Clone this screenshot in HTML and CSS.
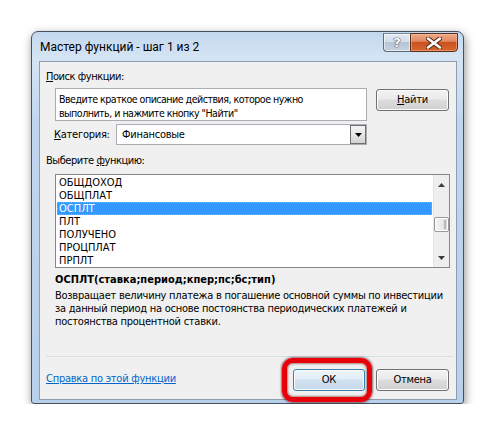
FILE: index.html
```html
<!DOCTYPE html>
<html lang="ru">
<head>
<meta charset="utf-8">
<title>Мастер функций</title>
<link rel="stylesheet" href="styles.css">
</head>
<body>
<div class="stage">
  <div class="window">
    <div class="titlebar">
      <span class="title">Мастер функций - шаг 1 из 2</span>
      <div class="caption">
        <div class="cap-btn help"><span class="help-glyph">?</span></div>
        <div class="cap-btn close">
          <svg width="16" height="12" viewBox="0 0 16 12"><path d="M2 1.5 L14 10.5 M14 1.5 L2 10.5" stroke="#5a2a14" stroke-width="4.6" stroke-linecap="round" fill="none"/><path d="M2 1.5 L14 10.5 M14 1.5 L2 10.5" stroke="#ffffff" stroke-width="2.6" stroke-linecap="round" fill="none"/></svg>
        </div>
      </div>
    </div>
    <div class="frame-body">
      <div class="client">
        <div class="label first"><u>П</u>оиск функции:</div>
        <div class="search-row">
          <div class="search-box">Введите краткое описание действия, которое нужно<br>выполнить, и нажмите кнопку "Найти"</div>
          <div class="btn find"><span><u>Н</u>айти</span></div>
        </div>
        <div class="cat-row">
          <span class="cat-label"><u>К</u>атегория:</span>
          <div class="combo">
            <span class="combo-text">Финансовые</span>
            <div class="dd"><svg width="7" height="4" viewBox="0 0 7 4"><polygon points="0,0 7,0 3.5,4" fill="#000"/></svg></div>
          </div>
        </div>
        <div class="label second">Выберите <u>ф</u>ункцию:</div>
        <div class="listbox">
          <div class="items">
            <div class="item">ОБЩДОХОД</div>
            <div class="item">ОБЩПЛАТ</div>
            <div class="item selected">ОСПЛТ</div>
            <div class="item">ПЛТ</div>
            <div class="item">ПОЛУЧЕНО</div>
            <div class="item">ПРОЦПЛАТ</div>
            <div class="item">ПРПЛТ</div>
          </div>
          <div class="vscroll">
            <div class="arrow up"><svg width="7" height="4" viewBox="0 0 7 4"><polygon points="0,4 7,4 3.5,0" fill="#3c3c3c"/></svg></div>
            <div class="track"><div class="thumb"><span class="grip"></span></div></div>
            <div class="arrow down"><svg width="7" height="4" viewBox="0 0 7 4"><polygon points="0,0 7,0 3.5,4" fill="#3c3c3c"/></svg></div>
          </div>
        </div>
        <div class="signature">ОСПЛТ(ставка;период;кпер;пс;бс;тип)</div>
        <div class="desc">Возвращает величину платежа в погашение основной суммы по инвестиции<br>за данный период на основе постоянства периодических платежей и<br>постоянства процентной ставки.</div>
        <div class="bottom">
          <div class="sep"></div>
          <div class="btn-row">
            <a class="help-link" href="#">Справка по этой функции</a>
            <div class="ok-wrap">
              <div class="btn ok"><span>ОК</span></div>
              <div class="ring"></div>
            </div>
            <div class="btn cancel"><span>Отмена</span></div>
          </div>
        </div>
      </div>
    </div>
  </div>
</div>
</body>
</html>
```
FILE: styles.css
```css
* { box-sizing: border-box; }

body {
  margin: 0;
  background: #ffffff;
  font-family: "DejaVu Sans Condensed", "DejaVu Sans", sans-serif;
  font-stretch: condensed;
  font-size: 11px;
  letter-spacing: -0.25px;
  color: #000;
}

.stage {
  padding: 31px 0 0 31px;
}

.window {
  width: 433px;
  height: 373px;
  border: 1px solid #44505e;
  border-radius: 7px 7px 3px 3px;
  background: linear-gradient(180deg, #c4d8ee 0%, #d4e4f4 7%, #c0d5ed 25%, #b9d0ea 100%);
  box-shadow: 1px 3px 10px rgba(0, 0, 0, 0.45);
  display: flex;
  flex-direction: column;
}

.titlebar {
  height: 29px;
  flex: none;
  display: flex;
  align-items: center;
  padding: 0 5px 0 8px;
}

.title {
  font-family: Roboto, "Open Sans", sans-serif;
  font-stretch: normal;
  letter-spacing: 0;
  font-size: 12px;
  color: #000;
  line-height: 16px;
}

.caption {
  margin-left: auto;
  align-self: flex-start;
  margin-top: 1px;
  display: flex;
}

.cap-btn {
  height: 19px;
  display: flex;
  align-items: center;
  justify-content: center;
  border: 1px solid #5f6d7e;
  border-top-color: #7a8898;
}

.help {
  width: 27px;
  border-right: none;
  border-radius: 0 0 0 4px;
  background: linear-gradient(180deg, #e3ebf4 0%, #d4dee9 45%, #b7c4d2 50%, #c7d3df 100%);
  box-shadow: inset 0 0 0 1px rgba(255, 255, 255, 0.5);
}

.help-glyph {
  font-family: "DejaVu Sans", sans-serif;
  font-stretch: normal;
  letter-spacing: 0;
  font-weight: bold;
  font-size: 13px;
  line-height: 13px;
  color: #ffffff;
  text-shadow: 0 0 1px #3b4650, 0 0 1px #3b4650, 0 0 1px #3b4650;
}

.close {
  width: 48px;
  border-radius: 0 0 4px 0;
  border-color: #5a2f20;
  background: linear-gradient(180deg, #eba989 0%, #e38a63 42%, #cc5320 50%, #d4652c 100%);
  box-shadow: inset 0 0 0 1px rgba(255, 200, 170, 0.45);
}

.frame-body {
  flex: 1;
  display: flex;
  padding: 0 6px 3px 7px;
  min-width: 0;
}

.client {
  flex: 1;
  min-width: 0;
  background: #f0f0f0;
  border: 1px solid #8e9db0;
  display: flex;
  flex-direction: column;
}

.label {
  line-height: 15px;
  margin-left: 6px;
  letter-spacing: -0.45px;
}

.label.first { margin-top: 7px; }
.label.second { margin-top: 8px; }

.search-row {
  display: flex;
  align-items: flex-start;
  margin: 4px 0 0 15px;
}

.search-box {
  width: 312px;
  height: 33px;
  flex: none;
  border: 1px solid #abadb3;
  background: #ffffff;
  padding: 3px 3px;
  font-size: 10.6px;
  letter-spacing: -0.52px;
  line-height: 14px;
  white-space: nowrap;
  overflow: hidden;
}

.btn {
  height: 22px;
  width: 73px;
  flex: none;
  border: 1px solid #707070;
  border-radius: 3px;
  background: linear-gradient(180deg, #f2f2f2 0%, #ebebeb 45%, #dddddd 50%, #cfcfcf 100%);
  box-shadow: inset 0 0 0 1px #fbfbfb;
  display: flex;
  align-items: center;
  justify-content: center;
  line-height: 14px;
}

.find {
  margin: 1px 0 0 9px;
}

.cat-row {
  display: flex;
  align-items: center;
  margin: 3px 0 0 14px;
}

.cat-label {
  width: 62px;
  flex: none;
  line-height: 15px;
}

.combo {
  width: 251px;
  height: 21px;
  flex: none;
  border: 1px solid #abadb3;
  background: #ffffff;
  display: flex;
  align-items: center;
}

.combo-text {
  padding-left: 5px;
  line-height: 15px;
}

.dd {
  margin-left: auto;
  width: 16px;
  height: 19px;
  border: 1px solid #6f6f6f;
  background: linear-gradient(180deg, #f4f4f4 0%, #e6e6e6 50%, #d2d2d2 100%);
  display: flex;
  align-items: center;
  justify-content: center;
}

.listbox {
  width: 395px;
  height: 94px;
  flex: none;
  margin: 6px 0 0 15px;
  border: 1px solid #828790;
  background: #ffffff;
  display: flex;
}

.items {
  flex: 1;
  padding: 1px 1px 0 1px;
  letter-spacing: 0;
}

.item {
  height: 13px;
  line-height: 13px;
  padding-left: 2px;
}

.item.selected {
  background: #3399ff;
  color: #ffffff;
  border: 1px dotted #f39a3c;
  padding-left: 1px;
  line-height: 11px;
}

.vscroll {
  width: 16px;
  background: #eeeeee;
  border-left: 1px solid #e4e4e4;
  display: flex;
  flex-direction: column;
}

.arrow {
  display: flex;
  align-items: center;
  justify-content: center;
}

.arrow.up { height: 20px; }
.arrow.down { height: 19px; }

.track {
  flex: 1;
  padding-top: 22px;
}

.thumb {
  width: 15px;
  height: 15px;
  border: 1px solid #999999;
  border-radius: 2px;
  background: linear-gradient(90deg, #f6f6f6 0%, #e8e8e8 55%, #d6d6d6 100%);
  box-shadow: inset 0 0 0 1px #ffffff;
  display: flex;
  justify-content: flex-end;
  padding: 2px 2px;
}

.grip {
  width: 2px;
  background: #b8b8b8;
}

.signature {
  margin: 4px 0 0 15px;
  font-weight: bold;
  letter-spacing: 0;
  line-height: 15px;
  white-space: nowrap;
}

.desc {
  margin: 2px 0 0 15px;
  line-height: 13px;
  white-space: nowrap;
}

.bottom {
  margin-top: auto;
  padding: 0 7px 8px 6px;
}

.sep {
  height: 1px;
  background: #d5dfe5;
  margin-right: -4px;
}

.btn-row {
  display: flex;
  align-items: flex-start;
  margin-top: 12px;
}

.help-link {
  color: #0066cc;
  text-decoration: underline;
  line-height: 15px;
  margin-top: 2px;
}

.ok-wrap {
  position: relative;
  margin-left: auto;
}

.ok {
  width: 72px;
  border-color: #3c7fb1;
  background: linear-gradient(180deg, #eef5fb 0%, #e2edf6 45%, #d0e1ef 50%, #c6d9ea 100%);
}

.ring {
  position: absolute;
  left: -11px;
  top: -11px;
  right: -7px;
  bottom: -11px;
  border: 5px solid #e8000b;
  border-radius: 11px;
  box-shadow: 0 0 2px 1px rgba(70, 0, 0, 0.55), inset 0 0 2px 1px rgba(70, 0, 0, 0.45);
}

.cancel {
  margin-left: 11px;
}
```
